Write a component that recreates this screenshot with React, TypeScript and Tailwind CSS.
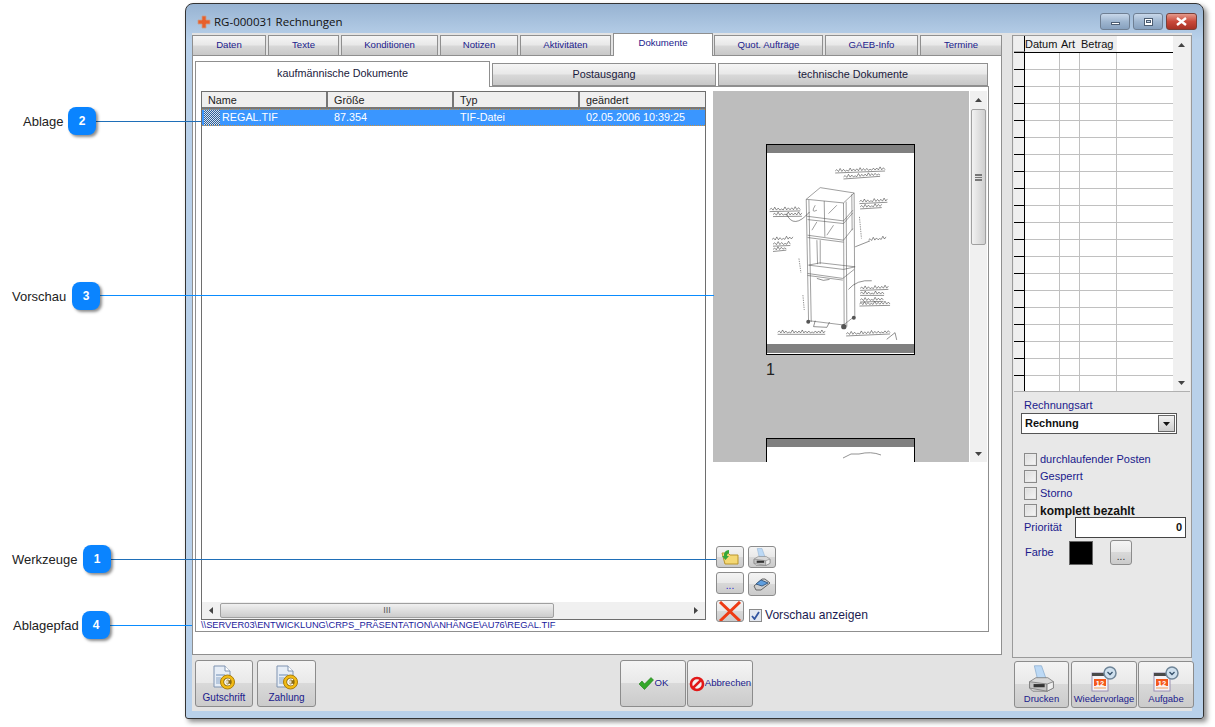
import type { ReactNode } from 'react';

const font = "font-['Liberation_Sans',Arial,sans-serif]";
const glass = 'border border-[#8c8c8c] rounded-[3px] bg-[linear-gradient(#f4f4f4_0%,#e9e9e9_48%,#d9d9d9_49%,#cbcbcb_100%)]';
const tabGlass = 'border border-[#8f8f8f] bg-[linear-gradient(#f5f5f5_0%,#e8e8e8_48%,#d8d8d8_52%,#c8c8c8_100%)]';

const mainTabs = [
  { label: 'Daten', cls: 'w-[74px] mr-[2px]' },
  { label: 'Texte', cls: 'w-[71px] mr-[2px]' },
  { label: 'Konditionen', cls: 'w-[97px] mr-[2px]' },
  { label: 'Notizen', cls: 'w-[78px] mr-[2px]' },
  { label: 'Aktivitäten', cls: 'w-[91px] mr-[2px]' },
  { label: 'Dokumente', cls: 'w-[100px] mr-[1px]', active: true },
  { label: 'Quot. Aufträge', cls: 'w-[109px] mr-[2px]' },
  { label: 'GAEB-Info', cls: 'w-[93px] mr-[2px]' },
  { label: 'Termine', cls: 'w-[82px]' },
];

const callouts = [
  { label: 'Ablage', n: 2, text: 'left-[23px] top-[114px]', badge: 'left-[68px] top-[107px]', line: 'left-[96px] top-[121px] w-[105px] border-[#1f6fb8]' },
  { label: 'Vorschau', n: 3, text: 'left-[12px] top-[289px]', badge: 'left-[72px] top-[282px]', line: 'left-[100px] top-[295px] w-[614px] border-[#0a8cff]' },
  { label: 'Werkzeuge', n: 1, text: 'left-[12px] top-[552px]', badge: 'left-[83px] top-[545px]', line: 'left-[111px] top-[559px] w-[605px] border-[#1f6fb8]' },
  { label: 'Ablagepfad', n: 4, text: 'left-[13px] top-[618px]', badge: 'left-[82px] top-[611px]', line: 'left-[110px] top-[625px] w-[82px] border-[#0a8cff]' },
];

const gridRows = Array.from({ length: 20 }, (_, i) => i);

// handwritten notes on the drawing: [x1, y1, x2, y2], underlined when the last entry is set
const notes: [number, number, number, number, boolean?][] = [
  [405, 122, 555, 116, true],
  [430, 140, 540, 132, true],
  [478, 214, 562, 210, true],
  [480, 230, 545, 226, true],
  [208, 238, 300, 236, true],
  [218, 253, 305, 252, true],
  [215, 328, 278, 324],
  [218, 342, 270, 340, true],
  [218, 358, 258, 354, true],
  [505, 330, 558, 324],
  [480, 475, 565, 472, true],
  [480, 490, 552, 490, true],
  [480, 510, 550, 508, true],
  [478, 522, 570, 520, true],
  [232, 607, 375, 607, true],
  [438, 612, 570, 606, true],
];

function handwriting([x1, y1, x2, y2, under]: [number, number, number, number, boolean?]) {
  const steps = Math.round((x2 - x1) / 5);
  let d = `M${x1} ${y1}`;
  for (let i = 1; i <= steps; i++) {
    const t = i / steps;
    const amp = i % 7 === 0 ? 1 : i % 3 === 0 ? 7 : 4;
    d += ` L${(x1 + (x2 - x1) * t).toFixed(1)} ${(y1 + (y2 - y1) * t + (i % 2 ? -amp : 2)).toFixed(1)}`;
  }
  if (under) d += ` M${x1} ${y1 + 6} L${x2} ${y2 + 6}`;
  return d;
}

function Calendar() {
  return (
    <svg width="28" height="26" viewBox="0 0 28 26">
      <rect x="2" y="7" width="16" height="18" fill="#f6f2f6" stroke="#9a8fb2" />
      <rect x="2" y="7" width="16" height="3" fill="#4a4a4a" />
      <rect x="4" y="13" width="12" height="7" fill="#f4581c" />
      <text x="10" y="19.5" textAnchor="middle" fontSize="7.5" fontWeight="700" fill="#fff" fontFamily="Liberation Sans">12</text>
      <rect x="4" y="21" width="12" height="2" fill="#f3c9a8" />
      <circle cx="20" cy="7" r="6" fill="#cfe0ee" stroke="#6f8598" strokeWidth="1.5" />
      <path d="M17.5 6 L20 8.5 L22.5 6" fill="none" stroke="#35506a" strokeWidth="1.3" />
    </svg>
  );
}

function EuroDoc() {
  return (
    <svg width="24" height="26" viewBox="0 0 24 26">
      <path d="M2 1 H13 L18 6 V22 H2 Z" fill="#e6edf6" stroke="#7f93b0" />
      <path d="M13 1 V6 H18" fill="#fff" stroke="#7f93b0" />
      <rect x="4" y="9" width="9" height="2" fill="#a9bdd6" />
      <rect x="4" y="12" width="5" height="7" fill="#b8c9de" />
      <circle cx="15.5" cy="17" r="7" fill="#f2bb14" stroke="#a97c0a" />
      <circle cx="15.5" cy="17" r="4.2" fill="#8a6a12" />
      <path d="M18 15 A3 3 0 1 0 18 19 M12.5 16.2 H16.5 M12.5 17.8 H16.5" fill="none" stroke="#fff" strokeWidth="1.2" />
    </svg>
  );
}

function Printer({ size = 34 }: { size?: number }) {
  return (
    <svg width={size} height={size} viewBox="0 -6 34 34">
      <path d="M8 -5 H17 L23 12 H12 Z" fill="#bcd9f5" stroke="#8fb0d0" />
      <path d="M2 15 L10 10 H25 L32 15 V23 L24 27 H6 L2 23 Z" fill="#d8d8d8" stroke="#777" />
      <path d="M2 15 L24 18 V27 L2 23 Z" fill="#c4c4c4" stroke="#777" />
      <path d="M7 18 H21 V22 H7 Z" fill="#333" />
      <path d="M24 18 L32 15 V23 L24 27 Z" fill="#eee" stroke="#777" />
    </svg>
  );
}

function BigBtn({ cls, icon, label, size = 'text-[10px]' }: { cls: string; icon?: ReactNode; label: string; size?: string }) {
  return (
    <div className={`${cls} ${glass} h-[47px] flex flex-col items-center justify-start pt-[2px]`}>
      <div className="h-[28px] flex items-end justify-center">{icon}</div>
      <span className={`${size} leading-[14px] text-[#1a1a8c] whitespace-nowrap`}>{label}</span>
    </div>
  );
}

function Sketch() {
  const line = { fill: 'none', stroke: '#555', strokeWidth: 1.7 };
  return (
    <svg className="block w-[147px] h-[191px]" viewBox="200 68 442 574">
      <rect x="200" y="68" width="442" height="574" fill="#fff" />
      <g {...line}>
        <path d="M318 207 L360 172 L462 188 L430 218 Z" />
        <path d="M318 207 L325 575 M326 209 L333 576 M430 218 L432 590 M438 214 L440 590 M462 188 L464 560 M455 192 L456 300" />
        <path d="M320 258 L430 272 L458 240 M322 268 L430 280 L458 248" />
        <path d="M322 315 L430 330 L458 295 M322 322 L430 336" />
        <path d="M372 212 L374 320 M350 330 L352 402 M360 330 L360 402" />
        <path d="M325 405 L430 418 L465 410 L360 398 Z M322 430 L428 445 L462 418 M322 436 L428 450" />
        <path d="M325 572 L430 585 L462 560" />
        <path d="M345 225 Q330 250 350 240 M410 225 L385 250 M350 275 L335 300 M400 285 L380 315" />
      </g>
      <circle cx="324" cy="575" r="6" fill="#555" />
      <circle cx="431" cy="590" r="8" fill="#555" />
      <circle cx="461" cy="563" r="6" fill="#555" />
      <g fill="none" stroke="#222" strokeWidth="1.5">
        {notes.map((n) => (
          <path key={`${n[0]}-${n[1]}`} d={handwriting(n)} />
        ))}
        <path d="M258 250 Q280 300 328 245 M465 350 L510 332 M445 478 Q470 448 515 452" />
        <path d="M296 385 L302 428 M308 495 L312 540 M478 260 L484 325" strokeDasharray="4 3" />
        <path d="M345 572 L340 590 L380 592 L388 576 M350 445 Q370 455 388 448 M560 628 L585 608 L590 630" />
      </g>
    </svg>
  );
}

function VScroll({ cls, thumb }: { cls: string; thumb?: boolean }) {
  return (
    <div className={`${cls} bg-[#f0f0f0] flex flex-col items-center`}>
      <div className="h-[18px] flex items-center justify-center shrink-0">
        <svg width="7" height="4" viewBox="0 0 7 4"><path d="M3.5 0 L7 4 H0 Z" fill="#444" /></svg>
      </div>
      {thumb && (
        <div className="w-[15px] h-[136px] border border-[#a0a0a0] rounded-[2px] bg-[linear-gradient(90deg,#f2f2f2,#e0e0e0_50%,#cfcfcf)] flex items-center justify-center">
          <div className="w-[7px] h-[7px] border-y-[2px] border-[#777] bg-[linear-gradient(#777,#777)] bg-[length:100%_1px] bg-center bg-no-repeat" />
        </div>
      )}
      <div className="flex-1" />
      <div className="h-[17px] flex items-center justify-center shrink-0">
        <svg width="7" height="4" viewBox="0 0 7 4"><path d="M0 0 H7 L3.5 4 Z" fill="#444" /></svg>
      </div>
    </div>
  );
}

function Check({ label, cls = 'text-[#1a1a8c]' }: { label: string; cls?: string }) {
  return (
    <div className="flex items-center h-[17px]">
      <div className="w-[13px] h-[13px] border border-[#8a8a8a] bg-[linear-gradient(135deg,#dcdcdc,#f6f6f6)] shadow-[inset_0_0_0_1px_#e8e8e8]" />
      <span className={`ml-[3px] text-[11px] ${cls}`}>{label}</span>
    </div>
  );
}

export default function App() {
  return (
    <div className={`relative w-[1215px] h-[727px] overflow-hidden bg-white ${font}`}>
      {/* Window */}
      <div className="ml-[185px] pt-[3px]">
        <div className="w-[1019px] h-[716px] border border-[#333] rounded-t-[8px] rounded-b-[3px] bg-[linear-gradient(#97b3d2_0%,#b9d1ea_5%,#b9d1ea_100%)] shadow-[3px_3px_5px_rgba(0,0,0,0.45)] flex flex-col">
          {/* Title bar */}
          <div className="h-[29px] flex items-center pl-[11px] pr-[6px] pt-[6px] shrink-0">
            <svg width="14" height="14" viewBox="0 0 14 14">
              <path d="M5 1 H9 V5 H13 V9 H9 V13 H5 V9 H1 V5 H5 Z" fill="#e8602c" stroke="#c9a08c" strokeWidth="0.8" />
            </svg>
            <span className="ml-[3px] text-[11.5px] text-[#111] font-['Open_Sans',sans-serif]">RG-000031 Rechnungen</span>
            <div className="ml-auto flex gap-[3px]">
              <div className="w-[30px] h-[17px] border border-[#6f7f93] rounded-[3px] bg-[linear-gradient(#c8d8ea,#9fb6d0_50%,#86a0be)] flex items-center justify-center">
                <div className="w-[9px] h-[3px] mt-[3px] bg-white border border-[#4c5d72]" />
              </div>
              <div className="w-[30px] h-[17px] border border-[#6f7f93] rounded-[3px] bg-[linear-gradient(#c8d8ea,#9fb6d0_50%,#86a0be)] flex items-center justify-center">
                <div className="w-[9px] h-[8px] bg-white border border-[#4c5d72] flex items-center justify-center"><div className="w-[5px] h-[3px] border border-[#4c5d72] bg-[#c8d8ea]" /></div>
              </div>
              <div className="w-[31px] h-[17px] border border-[#7a4038] rounded-[3px] bg-[linear-gradient(#e59a8c,#c9493a_50%,#a83225)] flex items-center justify-center">
                <svg width="11" height="9" viewBox="0 0 11 9"><path d="M1 1 L10 8 M10 1 L1 8" stroke="#fff" strokeWidth="2.4" /></svg>
              </div>
            </div>
          </div>

          <div className="flex-1 ml-[6px] mb-[7px] mr-[11px] bg-[#e3e3e3] flex gap-[10px] min-h-0">
            {/* Left column */}
            <div className="w-[810px] flex flex-col">
              <div className="flex items-end h-[22px] shrink-0 relative z-10">
                {mainTabs.map((t) => (
                  <div
                    key={t.label}
                    className={`${t.cls} flex items-center justify-center text-[9.6px] text-[#1a1a8c] ${
                      t.active ? 'h-[23px] -mb-px bg-white border border-b-0 border-[#8f8f8f] pb-[3px]' : `h-[20px] ${tabGlass} border-b-0`
                    }`}
                  >
                    {t.label}
                  </div>
                ))}
              </div>
              <div className="h-[600px] border border-[#8f8f8f] bg-white pl-[2px] pr-[13px] pt-[4px] shrink-0">
                {/* Sub tabs */}
                <div className="flex items-end h-[26px] relative z-10">
                  <div className="w-[295px] h-[26px] -mb-px bg-white border border-b-0 border-[#8f8f8f] flex items-center justify-center text-[10.8px] text-[#1a1a3c] pb-[3px]">kaufmännische Dokumente</div>
                  <div className={`w-[224px] ml-[2px] h-[23px] ${tabGlass} flex items-center justify-center text-[10.8px] text-[#1a1a3c]`}>Postausgang</div>
                  <div className={`w-[270px] ml-[2px] h-[23px] ${tabGlass} flex items-center justify-center text-[10.8px] text-[#1a1a3c]`}>technische Dokumente</div>
                </div>
                <div className="w-[794px] h-[546px] border border-[#8f8f8f] pl-[5px] pt-[4px] flex">
                  {/* File list */}
                  <div className="w-[505px] flex flex-col">
                    <div className="h-[530px] border border-[#6e6e6e] flex flex-col">
                      <div className="flex h-[17px] bg-[#efefef] text-[10.8px] text-[#222] leading-[17px] shrink-0">
                        <div className="w-[126px] border-r-2 border-b-2 border-[#777] pl-[6px]">Name</div>
                        <div className="w-[126px] border-r-2 border-b-2 border-[#777] pl-[6px]">Größe</div>
                        <div className="w-[126px] border-r-2 border-b-2 border-[#777] pl-[6px]">Typ</div>
                        <div className="flex-1 border-b-2 border-[#777] pl-[6px]">geändert</div>
                      </div>
                      <div className="flex h-[17px] bg-[#3a96ff] border-y border-dotted border-[#d0903a] text-[10.8px] text-white leading-[15px] shrink-0">
                        <div className="w-[126px] pl-[2px] flex items-center gap-[2px]">
                          <div className="w-[16px] h-[15px] bg-[repeating-conic-gradient(#2f5f96_0_25%,#d8e4f2_0_50%)] bg-[length:2px_2px]" />
                          <span>REGAL.TIF</span>
                        </div>
                        <div className="w-[126px] pl-[6px]">87.354</div>
                        <div className="w-[126px] pl-[6px]">TIF-Datei</div>
                        <div className="pl-[6px]">02.05.2006 10:39:25</div>
                      </div>
                      <div className="flex-1" />
                      <div className="h-[17px] bg-[#f0f0f0] flex items-center shrink-0">
                        <div className="w-[18px] flex justify-center">
                          <svg width="4" height="7" viewBox="0 0 4 7"><path d="M4 0 V7 L0 3.5 Z" fill="#444" /></svg>
                        </div>
                        <div className="w-[334px] h-[15px] border border-[#a0a0a0] rounded-[2px] bg-[linear-gradient(#f0f0f0,#dedede_50%,#cccccc)] flex items-center justify-center text-[9px] text-[#555] leading-none">III</div>
                        <div className="flex-1" />
                        <div className="w-[18px] flex justify-center">
                          <svg width="4" height="7" viewBox="0 0 4 7"><path d="M0 0 V7 L4 3.5 Z" fill="#444" /></svg>
                        </div>
                      </div>
                    </div>
                    <div className="text-[9.3px] leading-[11px] text-[#1a1a9c] whitespace-nowrap">\\SERVER03\ENTWICKLUNG\CRPS_PRÄSENTATION\ANHÄNGE\AU76\REGAL.TIF</div>
                  </div>

                  {/* Preview */}
                  <div className="ml-[7px] w-[274px] flex flex-col">
                    <div className="h-[371px] flex shrink-0">
                      <div className="w-[256px] bg-[#bdbdbd] overflow-hidden pl-[53px] pt-[53px]">
                        <div className="w-[149px] h-[211px] border border-black bg-white">
                          <div className="h-[8px] bg-[#808080]" />
                          <Sketch />
                          <div className="h-[9px] bg-[#808080]" />
                        </div>
                        <div className="h-[83px] pt-[4px] text-[16px] leading-[22px] text-[#222]">1</div>
                        <div className="w-[149px] h-[40px] border border-black bg-white">
                          <div className="h-[8px] bg-[#808080]" />
                          <svg width="147" height="12" viewBox="0 0 147 12"><path d="M76 11 L84 7 H92 Q104 4 114 8" fill="none" stroke="#777" strokeWidth="0.8" /></svg>
                        </div>
                      </div>
                      <VScroll cls="ml-[1px] w-[17px]" thumb />
                    </div>
                    {/* Tool buttons */}
                    <div className="mt-[84px] pl-[3px] flex flex-col gap-[4px]">
                      <div className="flex gap-[4px]">
                        <div className={`w-[28px] h-[22px] ${glass} flex items-center justify-center`}>
                          <svg width="18" height="17" viewBox="0 0 18 17">
                            <path d="M1 4 H7 L9 6 H17 V15 H4 Z" fill="#f4d874" stroke="#b9952c" />
                            <path d="M8 1 A5 5 0 0 0 3 7 L1 7 L4.5 11 L8 7 L6 7 A3 3 0 0 1 8 4 Z" fill="#35a83a" />
                          </svg>
                        </div>
                        <div className={`w-[28px] h-[22px] ${glass} flex items-center justify-center`}><Printer size={18} /></div>
                      </div>
                      <div className="flex gap-[4px]">
                        <div className={`w-[28px] h-[22px] ${glass} flex items-end justify-center text-[10px] text-[#1a1ad0] leading-[14px]`}>...</div>
                        <div className={`w-[28px] h-[24px] ${glass} flex items-center justify-center`}>
                          <svg width="18" height="14" viewBox="0 0 18 14">
                            <path d="M1 9 L9 2 H12 L17 6 L8 13 H3 Z" fill="#cfcfcf" stroke="#666" />
                            <path d="M3 7 L8 3 L15 6 L9 9 Z" fill="#5f9fe0" stroke="#3d5f86" />
                          </svg>
                        </div>
                      </div>
                      <div className="flex items-center -mt-[2px]">
                        <div className={`w-[28px] h-[22px] ${glass} flex items-center justify-center overflow-hidden`}>
                          <svg width="26" height="21" viewBox="0 0 26 21"><path d="M3 1 L23 20 M23 1 L3 20" stroke="#ee3b14" strokeWidth="3" /></svg>
                        </div>
                        <div className="ml-[5px] mt-[8px] flex items-center">
                          <div className="w-[13px] h-[13px] border border-[#8a8a8a] bg-[#e4e8f0] flex items-center justify-center">
                            <svg width="9" height="9" viewBox="0 0 9 9"><path d="M1 5 L3.5 8 L8 1" fill="none" stroke="#3355a0" strokeWidth="1.8" /></svg>
                          </div>
                          <span className="ml-[3px] text-[12.1px] text-[#1a1a50]">Vorschau anzeigen</span>
                        </div>
                      </div>
                    </div>
                  </div>
                </div>
              </div>

              {/* Bottom buttons */}
              <div className="mt-[5px] pl-[3px] flex items-start">
                <BigBtn cls="w-[58px]" label="Gutschrift" icon={<EuroDoc />} />
                <BigBtn cls="w-[59px] ml-[4px]" label="Zahlung" icon={<EuroDoc />} />
                <div className={`ml-[304px] w-[66px] h-[47px] ${glass} flex items-center justify-center text-[9.6px] text-[#1a1a8c]`}>
                  <svg width="16" height="13" viewBox="0 0 16 13"><path d="M1 7 L4 4 L6.5 7 L13 0.5 L15.5 3 L6.5 12.5 Z" fill="#34a82a" stroke="#1f7a18" strokeWidth="0.6" /></svg>
                  <span className="ml-[1px]">OK</span>
                </div>
                <div className={`ml-[1px] w-[66px] h-[47px] ${glass} flex items-center justify-center text-[9.6px] text-[#1a1a8c]`}>
                  <svg width="16" height="16" viewBox="0 0 16 16"><circle cx="8" cy="8" r="6" fill="#f2f2f2" stroke="#e21818" strokeWidth="2.6" /><path d="M3.8 12.2 L12.2 3.8" stroke="#e21818" strokeWidth="2.6" /></svg>
                  <span>Abbrechen</span>
                </div>
              </div>
            </div>

            {/* Right column */}
            <div className="w-[180px]">
              <div className="h-[623px] mt-[2px] border border-[#9a9a9a] bg-[#e8e8e8] px-[1px] flex flex-col">
                {/* Payments grid */}
                <div className="h-[355px] bg-white flex shrink-0 overflow-hidden">
                  <div className="flex-1 flex flex-col">
                    <div className="flex h-[17px] border-b border-black text-[11px] leading-[16px] text-[#111] shrink-0 bg-white">
                      <div className="w-[11px] bg-[#efefef] border-r border-black border-b border-b-[#aaa]" />
                      <div className="w-[35px] bg-[#efefef] overflow-hidden">Datum</div>
                      <div className="w-[20px] bg-[#efefef] pl-px">Art</div>
                      <div className="w-[37px] bg-[#efefef] pl-px whitespace-nowrap">Betrag</div>
                      <div className="flex-1" />
                    </div>
                    {gridRows.map((r) => (
                      <div key={r} className="flex h-[17px] shrink-0">
                        <div className="w-[11px] bg-[#efefef] border-r border-black border-b border-b-black" />
                        <div className="w-[35px] border-r border-b border-[#c0c0c0]" />
                        <div className="w-[20px] border-r border-b border-[#c0c0c0]" />
                        <div className="w-[37px] border-r border-b border-[#c0c0c0]" />
                        <div className="flex-1 border-b border-[#c0c0c0]" />
                      </div>
                    ))}
                  </div>
                  <VScroll cls="w-[17px]" />
                </div>
                <div className="pl-[10px] pt-[7px] flex-1 border-t border-[#b0b0b0]">
                  <div className="text-[11px] leading-[13px] text-[#1a1a8c]">Rechnungsart</div>
                  <div className="mt-[1px] -ml-[3px] w-[156px] h-[21px] border border-[#555] bg-white flex items-center pl-[3px] pr-[1px] text-[11px] font-bold text-[#111]">
                    Rechnung
                    <div className="ml-auto w-[17px] h-[17px] border border-[#666] bg-[linear-gradient(#f2f2f2,#cccccc)] flex items-center justify-center">
                      <svg width="7" height="4" viewBox="0 0 7 4"><path d="M0 0 H7 L3.5 4 Z" fill="#111" /></svg>
                    </div>
                  </div>
                  <div className="mt-[17px] flex flex-col">
                    <Check label="durchlaufender Posten" />
                    <Check label="Gesperrt" />
                    <Check label="Storno" />
                    <Check label="komplett bezahlt" cls="font-bold text-[12px] text-[#111]" />
                  </div>
                  <div className="-mt-[2px] flex items-center">
                    <span className="w-[51px] text-[11px] text-[#1a1a8c]">Priorität</span>
                    <div className="w-[111px] h-[21px] border border-[#444] bg-white text-right pr-[3px] text-[11px] font-bold leading-[19px] text-[#111]">0</div>
                  </div>
                  <div className="mt-[2px] flex items-center">
                    <span className="w-[45px] pl-[1px] text-[11px] text-[#1a1a8c]">Farbe</span>
                    <div className="w-[24px] h-[24px] bg-black border border-[#666]" />
                    <div className={`ml-[17px] w-[22px] h-[25px] ${glass} flex items-end justify-center text-[10px] leading-[14px] text-[#333]`}>...</div>
                  </div>
                </div>
              </div>
              {/* These three overhang the column by two pixels on the right */}
              <div className="mt-[3px] ml-[2px] flex w-[180px]">
                <BigBtn cls="w-[55px]" label="Drucken" size="text-[9.5px]" icon={<Printer size={27} />} />
                <BigBtn cls="w-[66px] ml-[2px]" label="Wiedervorlage" size="text-[9.4px]" icon={<Calendar />} />
                <BigBtn cls="w-[56px] ml-[1px]" label="Aufgabe" size="text-[9.5px]" icon={<Calendar />} />
              </div>
            </div>
          </div>
        </div>
      </div>

      {/* Callouts */}
      {callouts.map((c) => (
        <div key={c.n}>
          <div className={`absolute border-t ${c.line}`} />
          <span className={`absolute ${c.text} text-[13px] leading-[16px] text-[#222]`}>{c.label}</span>
          <div className={`absolute ${c.badge} w-[28px] h-[28px] rounded-[8px] bg-[#0a84ff] shadow-[2px_2px_3px_rgba(0,0,0,0.45)] flex items-center justify-center text-white text-[12px] font-bold`}>{c.n}</div>
        </div>
      ))}
    </div>
  );
}
